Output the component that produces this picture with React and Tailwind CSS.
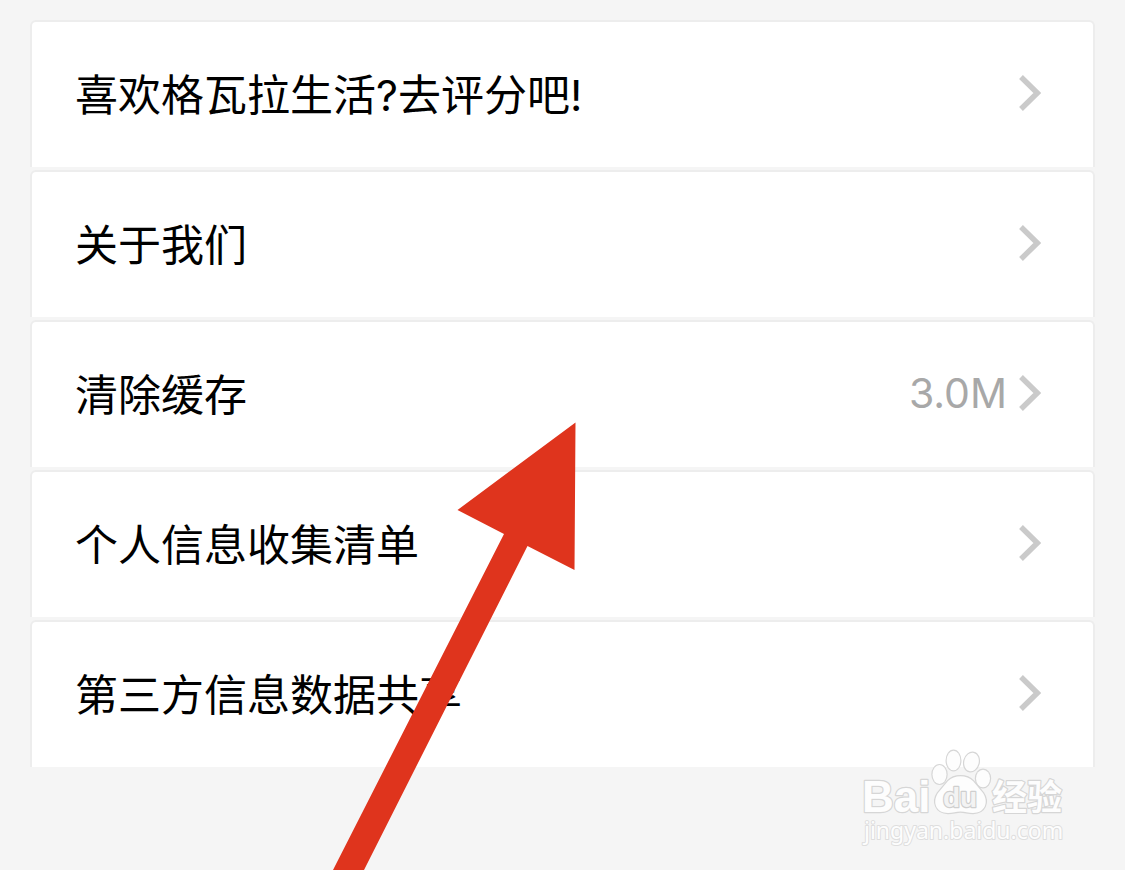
const rows = [
  { label: "喜欢格瓦拉生活?去评分吧!" },
  { label: "关于我们" },
  { label: "清除缓存", value: "3.0M" },
  { label: "个人信息收集清单" },
  { label: "第三方信息数据共享" },
];

function Chevron() {
  return (
    <svg className="h-9 w-[22px] shrink-0" viewBox="0 0 22 36" fill="none" aria-hidden="true">
      <path d="M2 2 L18.300 18 L2 34" stroke="#cacaca" strokeWidth="5.4" />
    </svg>
  );
}

function SettingsRow({ label, value }) {
  return (
    <li>
      <button
        type="button"
        className="flex min-h-[147px] w-full items-center justify-between rounded-t-md border-x-2 border-t-2 border-[#ededed] bg-white pr-[52px] pb-1 pl-[43px] text-left"
      >
        <span className="pt-1 text-[43px] leading-[60px] text-black">{label}</span>
        <span className="flex items-center gap-3">
          {value && <span className="text-[41px] leading-[60px] text-[#a8a8a8]">{value}</span>}
          <Chevron />
        </span>
      </button>
    </li>
  );
}

function Arrow() {
  return (
    <svg
      className="pointer-events-none absolute top-[422px] left-[333px] h-[448px] w-[243px]"
      viewBox="0 0 243 448"
      aria-hidden="true"
    >
      <path d="M242.5 0.5 L241.5 148 L194.5 124 L31 448 L0 448 L171 112 L124.5 88 Z" fill="#df341d" />
    </svg>
  );
}

function Watermark() {
  return (
    <svg
      className="pointer-events-none absolute right-[57px] bottom-[18px] h-[106px] w-[208px]"
      viewBox="860 746 208 106"
      fill="#fdfdfd"
      stroke="#d6d6d6"
      strokeWidth="2.4"
      strokeLinejoin="round"
      paintOrder="stroke"
      role="img"
      aria-label="Baidu 经验 jingyan.baidu.com"
    >
      <g strokeWidth="2.4">
        <ellipse cx="939.5" cy="774.5" rx="7" ry="9.4" />
        <ellipse cx="953.5" cy="760.5" rx="6.8" ry="9.8" />
        <ellipse cx="971.5" cy="762" rx="7.2" ry="9.4" transform="rotate(14 971.5 762)" />
        <ellipse cx="983" cy="778.5" rx="7" ry="8.8" />
        <path d="M948 781 C954 774.500 967 774.500 973 781 L983 793 C989 802 985 813 973 813 C968 813 965 811.500 960.500 811.500 C956 811.500 953 813 948 813 C936 813 932 802 938 793 Z" />
      </g>
      <text x="862" y="812" fontSize="44" fontWeight="700" fontFamily='"Liberation Sans", Arial, sans-serif'>Bai</text>
      <text x="943" y="807" fontSize="28" fontWeight="700" fill="#f3f3f3" stroke="#cfcfcf" fontFamily='"Liberation Sans", Arial, sans-serif'>du</text>
      <text x="992" y="810" fontSize="35" fontWeight="700" fontFamily='"Noto Sans CJK SC", sans-serif'>经验</text>
      <text x="864" y="839" fontSize="23" strokeWidth="2" stroke="#dedede" fontFamily='"Noto Sans", sans-serif'>jingyan.baidu.com</text>
    </svg>
  );
}

export default function App() {
  return (
    <main className="relative min-h-screen overflow-hidden bg-[#f5f5f5] px-[30px] pt-5 font-['Inter','Noto_Sans_CJK_SC',sans-serif]">
      <ul className="flex flex-col gap-[3px]">
        {rows.map((row) => (
          <SettingsRow key={row.label} {...row} />
        ))}
      </ul>
      <Arrow />
      <Watermark />
    </main>
  );
}
